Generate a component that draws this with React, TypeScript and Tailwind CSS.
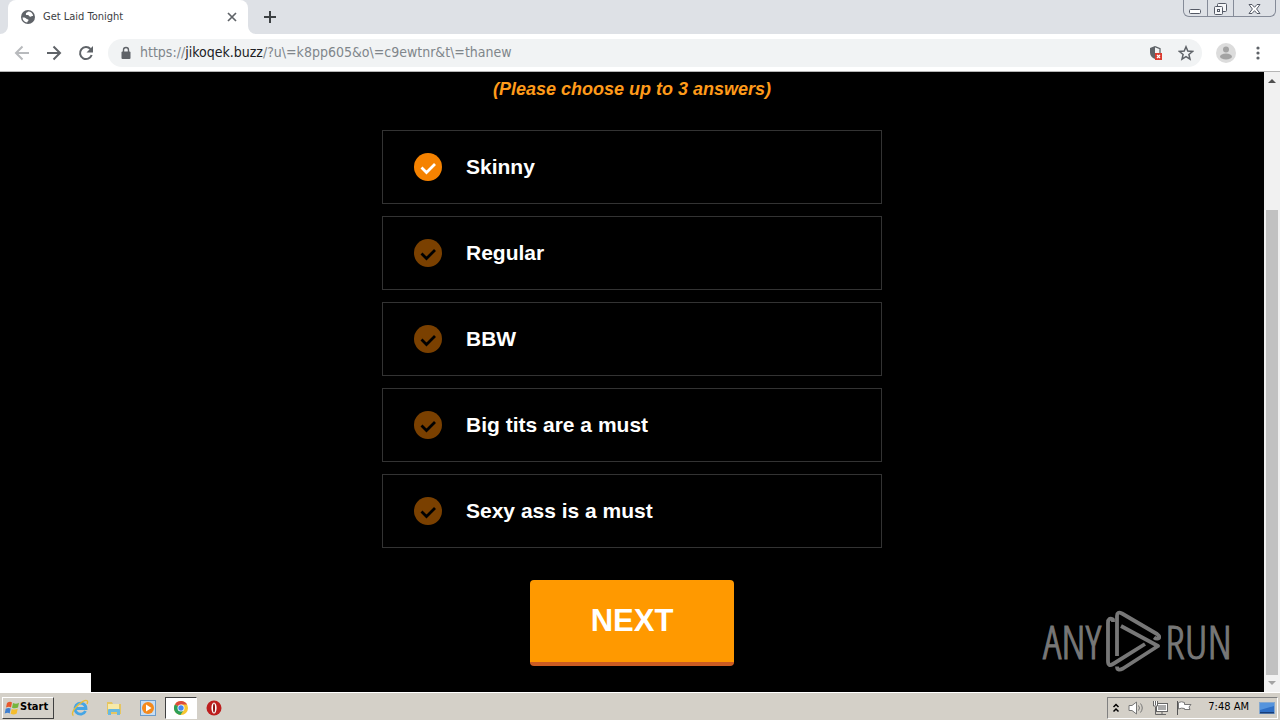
import { useState } from "react";

const answers = [
	"Skinny",
	"Regular",
	"BBW",
	"Big tits are a must",
	"Sexy ass is a must",
];

function GlobeIcon() {
	return (
		<svg viewBox="0 0 16 16" className="w-4 h-4 shrink-0">
			<circle cx="8" cy="8" r="7" fill="#5f6368" />
			<path
				d="M2.500 8.500c1.500-.3 3 .2 4 1.200.8.8 2 .3 2 1.500 0 .9-1.300 1-1.300 2.300C4.600 13.300 2.600 11.300 2.500 8.500ZM8 2.600c-.6 1.200-2 1-2.200 2.300-.1 1 1 1.300 2 1.200 1.200-.1 1 1.500 2.300 1.700 1.300.2 1.400-.8 3-.7C12.900 4.500 11 2.600 8 2.600Z"
				fill="#fff"
			/>
		</svg>
	);
}

function TabStrip() {
	return (
		<div className="flex items-stretch h-[34px] pl-2 bg-[#dee1e6]">
			<div className="relative flex items-center gap-[7px] w-60 pl-3 pr-2.5 bg-white rounded-t-lg">
				<svg viewBox="0 0 8 8" className="absolute -left-2 bottom-0 w-2 h-2">
					<path d="M8 0v8H0a8 8 0 0 0 8-8Z" fill="#fff" />
				</svg>
				<svg viewBox="0 0 8 8" className="absolute -right-2 bottom-0 w-2 h-2">
					<path d="M0 0v8h8a8 8 0 0 1-8-8Z" fill="#fff" />
				</svg>
				<GlobeIcon />
				<span className="flex-1 text-[11px] text-[#3c4043]">
					Get Laid Tonight
				</span>
				<button type="button" aria-label="Close tab">
					<svg viewBox="0 0 12 12" className="w-3 h-3">
						<path d="m2 2 8 8M10 2l-8 8" stroke="#5f6368" strokeWidth="1.700" />
					</svg>
				</button>
			</div>
			<button type="button" aria-label="New tab" className="ml-4">
				<svg viewBox="0 0 12 12" className="w-3 h-3">
					<path d="M6 0v12M0 6h12" stroke="#3c4043" strokeWidth="2" />
				</svg>
			</button>
			<div className="flex ml-auto mr-1 self-start h-[17px] border border-t-0 border-[#858b98] rounded-b-md divide-x divide-[#858b98]">
				<button type="button" aria-label="Minimize" className="px-[5px]">
					<svg viewBox="0 0 13 15" className="w-[13px] h-[15px]">
						<rect x=".5" y="8.500" width="11" height="4" rx="1" fill="#fff" stroke="#555a66" />
					</svg>
				</button>
				<button type="button" aria-label="Restore" className="px-1.5">
					<svg viewBox="0 0 13 15" className="w-[13px] h-[15px]" fill="#f5f6f8" stroke="#555a66">
						<rect x="3.500" y="2.500" width="9" height="8" rx="1" />
						<rect x=".5" y="5.500" width="8" height="8" rx="1" />
						<rect x="3.500" y="8.500" width="2" height="2" />
					</svg>
				</button>
				<button type="button" aria-label="Close" className="px-[14px]">
					<svg viewBox="0 0 13 15" className="w-[13px] h-[15px]">
						<path
							d="M1 3.500h3l2.500 2.800L9 3.500h3L8.600 8l3.400 4.500H9L6.500 9.700 4 12.500H1L4.400 8Z"
							fill="#fff"
							stroke="#555a66"
						/>
					</svg>
				</button>
			</div>
		</div>
	);
}

function Toolbar() {
	return (
		<div className="flex items-center h-[38px] px-3.5 bg-white border-b border-[#b5b5b5]">
			<div className="flex gap-4">
				<button type="button" aria-label="Back">
					<svg viewBox="0 0 16 16" className="w-4 h-4" fill="none" stroke="#b8babd" strokeWidth="2">
						<path d="M15 8H2.500M8.500 1.500 2 8l6.500 6.500" />
					</svg>
				</button>
				<button type="button" aria-label="Forward">
					<svg viewBox="0 0 16 16" className="w-4 h-4" fill="none" stroke="#5f6368" strokeWidth="2">
						<path d="M1 8h12.500M7.500 1.500 14 8l-6.500 6.500" />
					</svg>
				</button>
				<button type="button" aria-label="Reload">
					<svg viewBox="0 0 16 16" className="w-4 h-4">
						<path d="M13.700 10A6 6 0 1 1 12.500 4" fill="none" stroke="#5f6368" strokeWidth="2" />
						<path d="M15 1v6.500H8.500Z" fill="#5f6368" />
					</svg>
				</button>
			</div>
			<div className="flex flex-1 items-center h-7 ml-3.5 pl-3 pr-2 bg-[#f1f3f4] rounded-full">
				<svg viewBox="0 0 12 14" className="w-3 h-[14px]">
					<rect x="1.500" y="5.500" width="9" height="7.500" rx="1" fill="#5f6368" />
					<path d="M3.500 6V4a2.500 2.500 0 0 1 5 0v2" fill="none" stroke="#5f6368" strokeWidth="1.400" />
				</svg>
				<span className="flex-1 ml-2 text-[14px] text-[#80868b]">
					https://<span className="text-[#202124]">jikoqek.buzz</span>
					/?u\=k8pp605&o\=c9ewtnr&t\=thanew
				</span>
				<button type="button" aria-label="Content blocked" className="mr-3.5">
					<svg viewBox="0 0 16 16" className="w-4 h-4">
						<path d="M7 1 2 3v4.500c0 3 2 5.500 5 6.500Z" fill="#5f6368" />
						<path d="M7 1.700 12 3.600V8" fill="none" stroke="#5f6368" strokeWidth="1.300" />
						<rect x="7" y="8" width="7" height="7" fill="#db3b30" />
						<path d="m9 10 3 3M12 10l-3 3" stroke="#fff" strokeWidth="1.200" />
					</svg>
				</button>
				<button type="button" aria-label="Bookmark this page">
					<svg viewBox="0 0 16 16" className="w-4 h-4">
						<path
							d="m8 1.800 1.800 4.300 4.700.4-3.600 3 1.100 4.600L8 11.700l-4 2.400 1.100-4.600-3.600-3 4.700-.4Z"
							fill="none"
							stroke="#5f6368"
							strokeWidth="1.500"
						/>
					</svg>
				</button>
			</div>
			<button type="button" aria-label="Profile" className="ml-3.5">
				<svg viewBox="0 0 20 20" className="w-5 h-5">
					<circle cx="10" cy="10" r="10" fill="#dcdcdc" />
					<circle cx="10" cy="6.500" r="3" fill="#a3a3a3" />
					<ellipse cx="10" cy="13.500" rx="6" ry="3" fill="#a3a3a3" />
				</svg>
			</button>
			<button type="button" aria-label="Menu" className="ml-3.5">
				<svg viewBox="0 0 16 16" className="w-4 h-4" fill="#5f6368">
					<circle cx="8" cy="3" r="1.600" />
					<circle cx="8" cy="8" r="1.600" />
					<circle cx="8" cy="13" r="1.600" />
				</svg>
			</button>
		</div>
	);
}

function Quiz() {
	const [selected, setSelected] = useState<string[]>(["Skinny"]);

	const toggle = (answer: string) => {
		if (selected.includes(answer)) {
			setSelected(selected.filter((a) => a !== answer));
		} else if (selected.length < 3) {
			setSelected([...selected, answer]);
		}
	};

	return (
		<form className="flex flex-col items-center pt-1 font-['Liberation_Sans',Arial,sans-serif] font-bold">
			<p className="text-[18px] leading-[26px] italic text-[#ff9b1a]">
				(Please choose up to 3 answers)
			</p>
			<div className="flex flex-col gap-3 w-full max-w-[500px] mt-7">
				{answers.map((answer) => {
					const checked = selected.includes(answer);
					return (
						<label
							key={answer}
							className="flex items-center h-[74px] pl-[31px] border border-[#333333] text-[21px] text-white"
						>
							<span className="grid w-7 h-7 mr-6">
								<input
									type="checkbox"
									checked={checked}
									onChange={() => toggle(answer)}
									className="col-start-1 row-start-1 w-7 h-7 appearance-none rounded-full bg-[#7a4000] checked:bg-[#f58200]"
								/>
								<svg
									viewBox="0 0 28 28"
									className="col-start-1 row-start-1 w-7 h-7 pointer-events-none"
								>
									<path
										d="m7.500 14.500 5 5 8.500-8.500"
										fill="none"
										stroke={checked ? "#fff" : "#000"}
										strokeWidth="2.800"
									/>
								</svg>
							</span>
							{answer}
						</label>
					);
				})}
			</div>
			<button
				type="button"
				className="h-[86px] px-[61px] mt-8 bg-[#ff9900] border-b-4 border-[#cc5c22] rounded text-[31px] text-white"
			>
				NEXT
			</button>
		</form>
	);
}

function Watermark() {
	return (
		<div className="absolute right-8 bottom-5 flex items-center gap-1 font-['Open_Sans_Condensed_Light','Open_Sans_Condensed',sans-serif] text-[46px] leading-[62px] text-[#777777] [-webkit-text-stroke:1px_#777777]">
			<span>ANY</span>
			<svg
				viewBox="0 0 56 62"
				className="w-14 h-[62px]"
				fill="none"
				stroke="#777777"
				strokeWidth="3.800"
				strokeLinejoin="round"
			>
				<path d="M8 12V9.500Q3 7 3 13v38q0 6 5 3l32-20" />
				<path d="M12 46V6q0-5 5-2.500L52 24q4 3 1 4.500-2 .5-4-1" />
				<path d="m16 16 37 20-35 22.500q-6 3-6-2" />
			</svg>
			<span>RUN</span>
		</div>
	);
}

function Scrollbar() {
	return (
		<div className="flex flex-col items-center w-4 bg-[#f1f1f1]">
			<svg viewBox="0 0 16 17" className="w-4 h-[17px] shrink-0">
				<path d="m4 11 4-4 4 4Z" fill="#505050" />
			</svg>
			<div className="flex-1 w-3 mt-[121px] bg-[#c1c1c1]" />
			<svg viewBox="0 0 16 17" className="w-4 h-[17px] shrink-0">
				<path d="m4 6 4 4 4-4Z" fill="#a3a3a3" />
			</svg>
		</div>
	);
}

function Taskbar() {
	return (
		<div className="flex items-center h-7 pt-0.5 px-0.5 bg-[#d4d0c8] border-t border-white">
			<button
				type="button"
				className="flex items-center h-[22px] w-[52px] pl-px border border-t-white border-l-white border-r-[#404040] border-b-[#404040] text-[11px] font-bold text-black"
			>
				<svg viewBox="0 0 16 16" className="w-4 h-4 shrink-0">
					<path d="M3 3q3-2 5-.5L7 7.500Q5 6 2 7.500Z" fill="#e8582c" />
					<path d="M9 3q3 1.500 6-.3L14 7.500q-3 1.500-6 .2Z" fill="#76b53c" />
					<path d="M1.700 8.700q3-1.500 5-.2l-1 5Q4 12 .7 13.500Z" fill="#3f7fd0" />
					<path d="M7.700 9q3 1.300 6-.2l-1 4.700q-3 2-6 .3Z" fill="#f5bd2c" />
				</svg>
				Start
			</button>
			<div className="flex items-center ml-[9px]">
				<button type="button" aria-label="Internet Explorer" className="px-2">
					<svg viewBox="0 0 18 18" className="w-[18px] h-[18px]">
						<path d="M14.500 12A5.500 5.500 0 1 1 15 9.500H4.500" fill="none" stroke="#45a5e5" strokeWidth="2.800" />
						<path d="M2.500 16.500C-1 15 5 6 12 2.300c4-2 5.500-.5 4 2.700" fill="none" stroke="#e8bd38" strokeWidth="1.400" />
					</svg>
				</button>
				<button type="button" aria-label="Windows Explorer" className="px-2">
					<svg viewBox="0 0 18 18" className="w-[18px] h-[18px]">
						<path d="M2 3h5l1 2h8v10H2Z" fill="#e6c561" />
						<path d="M3 5h11v7H3Z" fill="#f8eaa8" />
						<path d="M3 16v-5q0-1 1-1h10q1 0 1 1v5h-3v-3H6v3Z" fill="#69b9df" />
					</svg>
				</button>
				<button type="button" aria-label="Media Player" className="px-2">
					<svg viewBox="0 0 18 18" className="w-[18px] h-[18px]">
						<rect x="1.500" y="1.500" width="15" height="15" fill="#c7def4" stroke="#6b9ccb" />
						<circle cx="9" cy="9" r="6" fill="#f58a1c" />
						<path d="m7 5.500 5.500 3.500L7 12.500Z" fill="#fff" />
					</svg>
				</button>
				<button
					type="button"
					aria-label="Chrome"
					className="h-[22px] px-1.5 bg-white border border-t-[#404040] border-l-[#404040] border-r-white border-b-white"
				>
					<svg viewBox="0 0 18 18" className="w-[18px] h-[18px]">
						<circle cx="9" cy="9" r="7" fill="#f7c631" />
						<path d="M9 9 3 5.400A7 7 0 0 1 15.100 5.500H9Z" fill="#dd4b3e" />
						<path d="M2.900 5.500A7 7 0 0 0 8.400 16L12 10.700 9 9Z" fill="#2d9f58" />
						<circle cx="9" cy="9" r="3.500" fill="#fff" />
						<circle cx="9" cy="9" r="2.700" fill="#4688f1" />
					</svg>
				</button>
				<button type="button" aria-label="Opera" className="px-2">
					<svg viewBox="0 0 18 18" className="w-[18px] h-[18px]">
						<circle cx="9" cy="9" r="7.500" fill="#bd1e1e" />
						<ellipse cx="9" cy="9" rx="2.600" ry="5.500" fill="#fff" />
						<ellipse cx="9" cy="9" rx="1" ry="4.500" fill="#8d1010" />
					</svg>
				</button>
			</div>
			<div className="flex items-center gap-2 h-[22px] ml-auto pl-1 border border-t-[#808080] border-l-[#808080] border-r-white border-b-white text-[11px] text-black">
				<svg viewBox="0 0 8 12" className="w-2 h-3" fill="none" stroke="#000" strokeWidth="1.500">
					<path d="m1.500 5 2.500-2.500L6.500 5M1.500 9.500 4 7l2.500 2.500" />
				</svg>
				<svg viewBox="0 0 16 16" className="w-4 h-4" fill="none" stroke="#777">
					<path d="M1 5.500h3L8.500 2v12L4 10.500H1Z" fill="#fff" />
					<path d="M10.500 5.500q2 2.500 0 5M12.500 3.500q3.500 4.500 0 9" />
				</svg>
				<svg viewBox="0 0 16 16" className="w-4 h-4" stroke="#666">
					<rect x="4.500" y="3.500" width="11" height="8" fill="#fff" />
					<rect x="6.500" y="5.500" width="7" height="4" fill="#aaa" stroke="#aaa" />
					<path d="M10 12v2.500M6 14.500h8M3.500 7v7.500H6" fill="none" />
					<path d="M1.500 1v5h4V1M3.500 1v4" fill="#fff" />
				</svg>
				<svg viewBox="0 0 16 16" className="w-4 h-4" stroke="#777">
					<path d="M2.500 2.500q3-1.500 6 0v2h6.500l-2 2.500 1 2.500H8.500v-1q-3-1-6 .5Z" fill="#fff" />
					<path d="M1.500 1v14" stroke="#555" />
				</svg>
				<span className="ml-2">7:48 AM</span>
				<button type="button" aria-label="Show desktop" className="px-0.5">
					<svg viewBox="0 0 16 14" className="w-4 h-[14px]">
						<rect x=".5" y="1.500" width="15" height="11" fill="#2f6fc5" stroke="#84a8d0" />
						<path d="M1 2h14v3L1 9Z" fill="#5594dd" />
						<path d="M1 11h14v1.500H1Z" fill="#173d79" />
					</svg>
				</button>
			</div>
		</div>
	);
}

export default function App() {
	return (
		<div className="flex flex-col h-screen font-['DejaVu_Sans_Condensed','Noto_Sans',sans-serif]">
			<TabStrip />
			<Toolbar />
			<div className="flex flex-1 min-h-0 bg-black">
				<main className="relative flex-1 overflow-hidden">
					<Quiz />
					<Watermark />
					{/* Status bubble */}
					<div className="absolute left-0 bottom-0 w-[91px] h-[19px] bg-white" />
				</main>
				<Scrollbar />
			</div>
			<Taskbar />
		</div>
	);
}
